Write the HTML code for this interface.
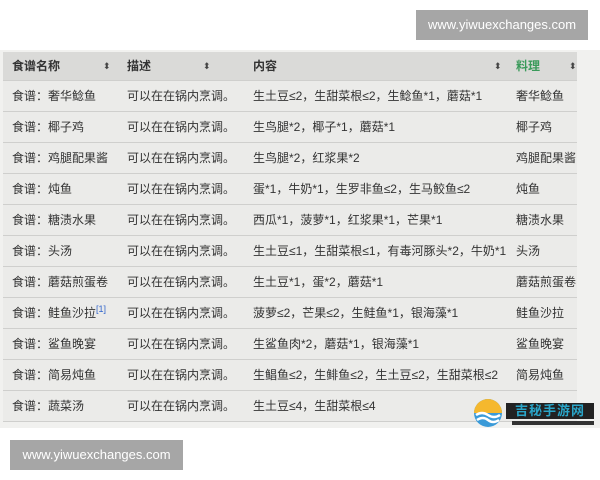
<!DOCTYPE html><html><head><meta charset="utf-8"><style>
body{margin:0;width:600px;height:480px;background:#fff;position:relative;overflow:hidden;font-family:"Liberation Sans","Noto Sans CJK SC",sans-serif;}
.wrap{position:absolute;left:0;top:50px;width:600px;height:378px;background:#f1f1ef;}
.tbl{position:absolute;left:3px;top:52px;width:574px;}
.row{position:relative;height:30px;border-bottom:1px solid #cfcfcd;background:#ebebe9;font-size:12px;color:#333;}
.row span{position:absolute;top:0;line-height:30px;white-space:nowrap;}
.hd{height:28px;background:#dadad8;font-weight:bold;color:#333;}
.hd span{line-height:28px}
.c1{left:9px}.c2{left:124px}.c3{left:250px}.c4{left:513px}
.ar{font-size:9px;color:#444;font-weight:normal}
.wm{position:absolute;background:#a6a6a6;color:#fff;font-size:13px;text-align:center;}
sup{line-height:0;vertical-align:5px}
</style></head><body>
<div class="wrap"></div>
<div class="wm" style="left:416px;top:10px;width:172px;height:30px;line-height:30px">www.yiwuexchanges.com</div>
<div class="tbl">
<div class="row hd"><span class="c1">食谱名称</span><span class="ar" style="left:100px">⬍</span><span class="c2">描述</span><span class="ar" style="left:200px">⬍</span><span class="c3">内容</span><span class="ar" style="left:491px">⬍</span><span class="c4" style="color:#3a9a5a">料理</span><span class="ar" style="left:566px">⬍</span></div>
<div class="row"><span class="c1">食谱：奢华鲶鱼</span><span class="c2">可以在在锅内烹调。</span><span class="c3">生土豆≤2，生甜菜根≤2，生鲶鱼*1，蘑菇*1</span><span class="c4">奢华鲶鱼</span></div>
<div class="row"><span class="c1">食谱：椰子鸡</span><span class="c2">可以在在锅内烹调。</span><span class="c3">生鸟腿*2，椰子*1，蘑菇*1</span><span class="c4">椰子鸡</span></div>
<div class="row"><span class="c1">食谱：鸡腿配果酱</span><span class="c2">可以在在锅内烹调。</span><span class="c3">生鸟腿*2，红浆果*2</span><span class="c4">鸡腿配果酱</span></div>
<div class="row"><span class="c1">食谱：炖鱼</span><span class="c2">可以在在锅内烹调。</span><span class="c3">蛋*1，牛奶*1，生罗非鱼≤2，生马鲛鱼≤2</span><span class="c4">炖鱼</span></div>
<div class="row"><span class="c1">食谱：糖渍水果</span><span class="c2">可以在在锅内烹调。</span><span class="c3">西瓜*1，菠萝*1，红浆果*1，芒果*1</span><span class="c4">糖渍水果</span></div>
<div class="row"><span class="c1">食谱：头汤</span><span class="c2">可以在在锅内烹调。</span><span class="c3">生土豆≤1，生甜菜根≤1，有毒河豚头*2，牛奶*1</span><span class="c4">头汤</span></div>
<div class="row"><span class="c1">食谱：蘑菇煎蛋卷</span><span class="c2">可以在在锅内烹调。</span><span class="c3">生土豆*1，蛋*2，蘑菇*1</span><span class="c4">蘑菇煎蛋卷</span></div>
<div class="row"><span class="c1">食谱：鲑鱼沙拉<sup style="color:#3366cc;font-size:9px">[1]</sup></span><span class="c2">可以在在锅内烹调。</span><span class="c3">菠萝≤2，芒果≤2，生鲑鱼*1，银海藻*1</span><span class="c4">鲑鱼沙拉</span></div>
<div class="row"><span class="c1">食谱：鲨鱼晚宴</span><span class="c2">可以在在锅内烹调。</span><span class="c3">生鲨鱼肉*2，蘑菇*1，银海藻*1</span><span class="c4">鲨鱼晚宴</span></div>
<div class="row"><span class="c1">食谱：简易炖鱼</span><span class="c2">可以在在锅内烹调。</span><span class="c3">生鲳鱼≤2，生鲱鱼≤2，生土豆≤2，生甜菜根≤2</span><span class="c4">简易炖鱼</span></div>
<div class="row"><span class="c1">食谱：蔬菜汤</span><span class="c2">可以在在锅内烹调。</span><span class="c3">生土豆≤4，生甜菜根≤4</span></div>
</div>
<svg style="position:absolute;left:472px;top:397px" width="32" height="32"><circle cx="16" cy="16" r="14" fill="#3a9ad8"/><path d="M2 16A14 14 0 0 1 30 16Z" fill="#f5b82e"/><path d="M4 18q6-4 12 0t12 0M5 23q6-4 11 0t11 0" stroke="#fff" stroke-width="2.5" fill="none"/></svg>
<div style="position:absolute;left:506px;top:403px;width:88px;height:16px;background:#222;color:#2aa5c8;font-size:13px;font-weight:bold;line-height:16px;text-align:center;letter-spacing:1px">吉秘手游网</div>
<div style="position:absolute;left:512px;top:421px;width:82px;height:4px;background:#333"></div>
<div class="wm" style="left:10px;top:440px;width:173px;height:30px;line-height:30px">www.yiwuexchanges.com</div>
</body></html>
